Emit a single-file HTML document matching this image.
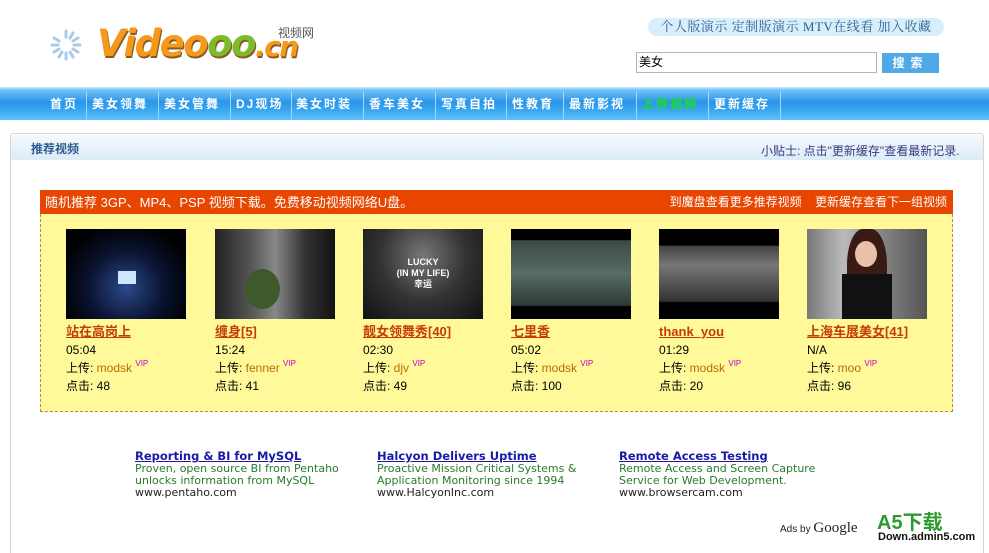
<!DOCTYPE html>
<html><head><meta charset="utf-8">
<style>
*{margin:0;padding:0;box-sizing:border-box}
body{width:989px;height:548px;overflow:hidden;background:#fff;font-family:"Liberation Sans","Noto Sans CJK SC",sans-serif;font-size:12px;color:#000;position:relative}
.abs{position:absolute}
.toplinks{left:648px;top:18px;width:296px;height:18px;background:#d9eefb;border-radius:9px;color:#2a6090;font-size:13px;line-height:18px;text-align:center;font-family:"Liberation Serif","Noto Serif CJK SC",serif;letter-spacing:0.5px}
.search{left:636px;top:52px;width:241px;height:21px;border:1px solid #b5b5b5;font-size:12px;line-height:19px;padding-left:2px}
.btn{left:882px;top:53px;width:57px;height:20px;background:#4ea9e6;color:#fff;font-weight:bold;text-align:center;line-height:20px;letter-spacing:6px;font-size:12px}
.nav{left:0;top:87px;width:989px;height:33px;background:linear-gradient(#cfe9fb 0,#6ec1f6 10%,#2a95e8 45%,#3aa6f0 70%,#5ec4fb 100%)}
.nav span{position:absolute;top:8px;color:#fff;font-weight:bold;font-size:12px;letter-spacing:2px;white-space:nowrap}
.nav i{position:absolute;top:4px;width:1px;height:28px;background:#9fd6fa}
.panel{left:10px;top:133px;width:974px;height:420px;border:1px solid #d6d6d6;border-bottom:none;border-radius:3px 3px 0 0}
.phead{left:11px;top:135px;width:972px;height:25px;background:linear-gradient(#f4f9fd,#dcecf9)}
.bar{left:40px;top:190px;width:913px;height:25px;background:#e84500;color:#fff;font-size:13px;line-height:25px}
.ybox{left:40px;top:214px;width:913px;height:198px;background:#fff99a;border:1px dashed #b8864a;border-top:none}
.item{position:absolute;top:229px;width:140px;font-size:12px}
.th{width:120px;height:90px;background:#111;overflow:hidden;position:relative}
.t{display:block;margin-top:4px;color:#c53d00;font-weight:bold;text-decoration:underline;font-size:13px;height:18px;line-height:18px}
.l{height:18px;line-height:18px;position:relative}
.u{color:#b86c00}
sup{color:#c000c0;font-size:8px;line-height:0;vertical-align:0;position:relative;top:-6px}
.ad{position:absolute;top:450px;font-size:11px;line-height:12px;font-family:"DejaVu Sans",sans-serif}
.ad b{color:#1a1aa6;text-decoration:underline;font-size:11.5px;display:block;margin-bottom:1px}
.ad .g{color:#2a7a2a}
.ad .w{color:#222}
</style></head><body>
<svg class="abs" style="left:48px;top:28px" width="36" height="34" viewBox="0 0 36 34">
<g stroke="#a9cbe8" stroke-width="3" stroke-linecap="round">
<line x1="18" y1="3" x2="18" y2="9"/><line x1="25" y1="5" x2="22" y2="10"/><line x1="30" y1="10" x2="25" y2="13"/><line x1="32" y1="17" x2="26" y2="17"/><line x1="30" y1="24" x2="25" y2="21"/><line x1="25" y1="29" x2="22" y2="24"/><line x1="18" y1="31" x2="18" y2="25"/><line x1="11" y1="29" x2="14" y2="24"/><line x1="6" y1="24" x2="11" y2="21"/><line x1="4" y1="17" x2="10" y2="17"/><line x1="6" y1="10" x2="11" y2="13"/>
</g></svg>
<div class="abs" style="left:97px;top:24px;font-family:'DejaVu Sans',sans-serif;font-weight:bold;font-style:italic;font-size:37px;letter-spacing:-1.5px;line-height:40px;text-shadow:1px 2px 0 #8a5a20"><span style="color:#f39a1c">Video</span><span style="color:#7cbb2a">oo</span><span style="color:#f39a1c;font-size:28px">.cn</span></div>
<div class="abs" style="left:278px;top:24px;font-size:12px;color:#555">视频网</div>
<div class="abs toplinks">个人版演示 定制版演示 MTV在线看 加入收藏</div>
<div class="abs search">美女</div>
<div class="abs btn">搜索</div>
<div class="abs nav">
<span style="left:50px">首页</span><i style="left:86px"></i>
<span style="left:92px">美女领舞</span><i style="left:158px"></i>
<span style="left:164px">美女管舞</span><i style="left:230px"></i>
<span style="left:236px">DJ现场</span><i style="left:291px"></i>
<span style="left:296px">美女时装</span><i style="left:363px"></i>
<span style="left:369px">香车美女</span><i style="left:435px"></i>
<span style="left:441px">写真自拍</span><i style="left:506px"></i>
<span style="left:512px">性教育</span><i style="left:563px"></i>
<span style="left:569px">最新影视</span><i style="left:636px"></i>
<span style="left:642px;color:#19e019">上传视频</span><i style="left:708px"></i>
<span style="left:714px">更新缓存</span><i style="left:780px"></i>
</div>
<div class="abs panel"></div>
<div class="abs phead"></div>
<div class="abs" style="left:31px;top:140px;font-weight:bold;color:#2b5a8f;font-size:12px">推荐视频</div>
<div class="abs" style="left:761px;top:142px;color:#3a3a7a;font-size:12px">小贴士: 点击"更新缓存"查看最新记录.</div>
<div class="abs bar"><span style="position:absolute;left:5px">随机推荐 3GP、MP4、PSP 视频下载。免费移动视频网络U盘。</span><span style="position:absolute;right:6px;font-size:12px">到魔盘查看更多推荐视频 &nbsp;&nbsp; 更新缓存查看下一组视频</span></div>
<div class="abs ybox"></div>

<div class="item" style="left:66px"><div class="th" style="background:radial-gradient(ellipse at 50% 65%,#2b4a8a 0,#0a1330 45%,#000 80%)"><div style="position:absolute;left:52px;top:42px;width:18px;height:13px;background:#cfe6ff"></div></div><span class="t">站在高岗上</span><div class="l">05:04</div><div class="l">上传: <span class="u">modsk</span> <sup>VIP</sup></div><div class="l">点击: 48</div></div>
<div class="item" style="left:215px"><div class="th" style="background:linear-gradient(90deg,#222 0,#555 30%,#888 50%,#333 75%,#111)"><div style="position:absolute;left:30px;top:40px;width:35px;height:40px;background:#3e5a2a;border-radius:50%"></div></div><span class="t">缠身[5]</span><div class="l">15:24</div><div class="l">上传: <span class="u">fenner</span> <sup>VIP</sup></div><div class="l">点击: 41</div></div>
<div class="item" style="left:363px"><div class="th" style="background:radial-gradient(ellipse at 50% 30%,#777 0,#333 50%,#111 100%);color:#fff;font-size:9px;text-align:center;padding-top:28px;line-height:11px;font-weight:bold">LUCKY<br>(IN MY LIFE)<br>幸运</div><span class="t">靓女领舞秀[40]</span><div class="l">02:30</div><div class="l">上传: <span class="u">djv</span> <sup>VIP</sup></div><div class="l">点击: 49</div></div>
<div class="item" style="left:511px"><div class="th" style="background:linear-gradient(#000 0,#000 12%,#3b4a44 13%,#5a6c66 50%,#2b3a33 85%,#000 86%)"></div><span class="t">七里香</span><div class="l">05:02</div><div class="l">上传: <span class="u">modsk</span> <sup>VIP</sup></div><div class="l">点击: 100</div></div>
<div class="item" style="left:659px"><div class="th" style="background:linear-gradient(#000 0,#000 18%,#444 19%,#777 40%,#333 80%,#000 82%)"></div><span class="t">thank&nbsp; you</span><div class="l">01:29</div><div class="l">上传: <span class="u">modsk</span> <sup>VIP</sup></div><div class="l">点击: 20</div></div>
<div class="item" style="left:807px"><div class="th" style="background:linear-gradient(90deg,#777,#bbb 30%,#888 60%,#555)"><div style="position:absolute;left:40px;top:0;width:40px;height:90px;background:#3a1a14;border-radius:40% 40% 0 0"></div><div style="position:absolute;left:48px;top:12px;width:22px;height:26px;background:#e8c2a8;border-radius:50%"></div><div style="position:absolute;left:35px;top:45px;width:50px;height:45px;background:#111"></div></div><span class="t">上海车展美女[41]</span><div class="l">N/A</div><div class="l">上传: <span class="u">moo</span> <sup>VIP</sup></div><div class="l">点击: 96</div></div>

<div class="ad" style="left:135px"><b>Reporting &amp; BI for MySQL</b><span class="g">Proven, open source BI from Pentaho<br>unlocks information from MySQL</span><br><span class="w">www.pentaho.com</span></div>
<div class="ad" style="left:377px"><b>Halcyon Delivers Uptime</b><span class="g">Proactive Mission Critical Systems &amp;<br>Application Monitoring since 1994</span><br><span class="w">www.HalcyonInc.com</span></div>
<div class="ad" style="left:619px"><b>Remote Access Testing</b><span class="g">Remote Access and Screen Capture<br>Service for Web Development.</span><br><span class="w">www.browsercam.com</span></div>
<div class="abs" style="left:780px;top:520px;font-size:10px;color:#222">Ads by <span style="font-size:15px;font-family:'Liberation Serif',serif">Google</span></div>
<div class="abs" style="left:877px;top:512px;color:#2c9a2c;font-weight:bold;font-size:20px;line-height:22px">A5下载</div>
<div class="abs" style="left:878px;top:531px;color:#111;font-weight:bold;font-size:11px">Down.admin5.com</div>
</body></html>
